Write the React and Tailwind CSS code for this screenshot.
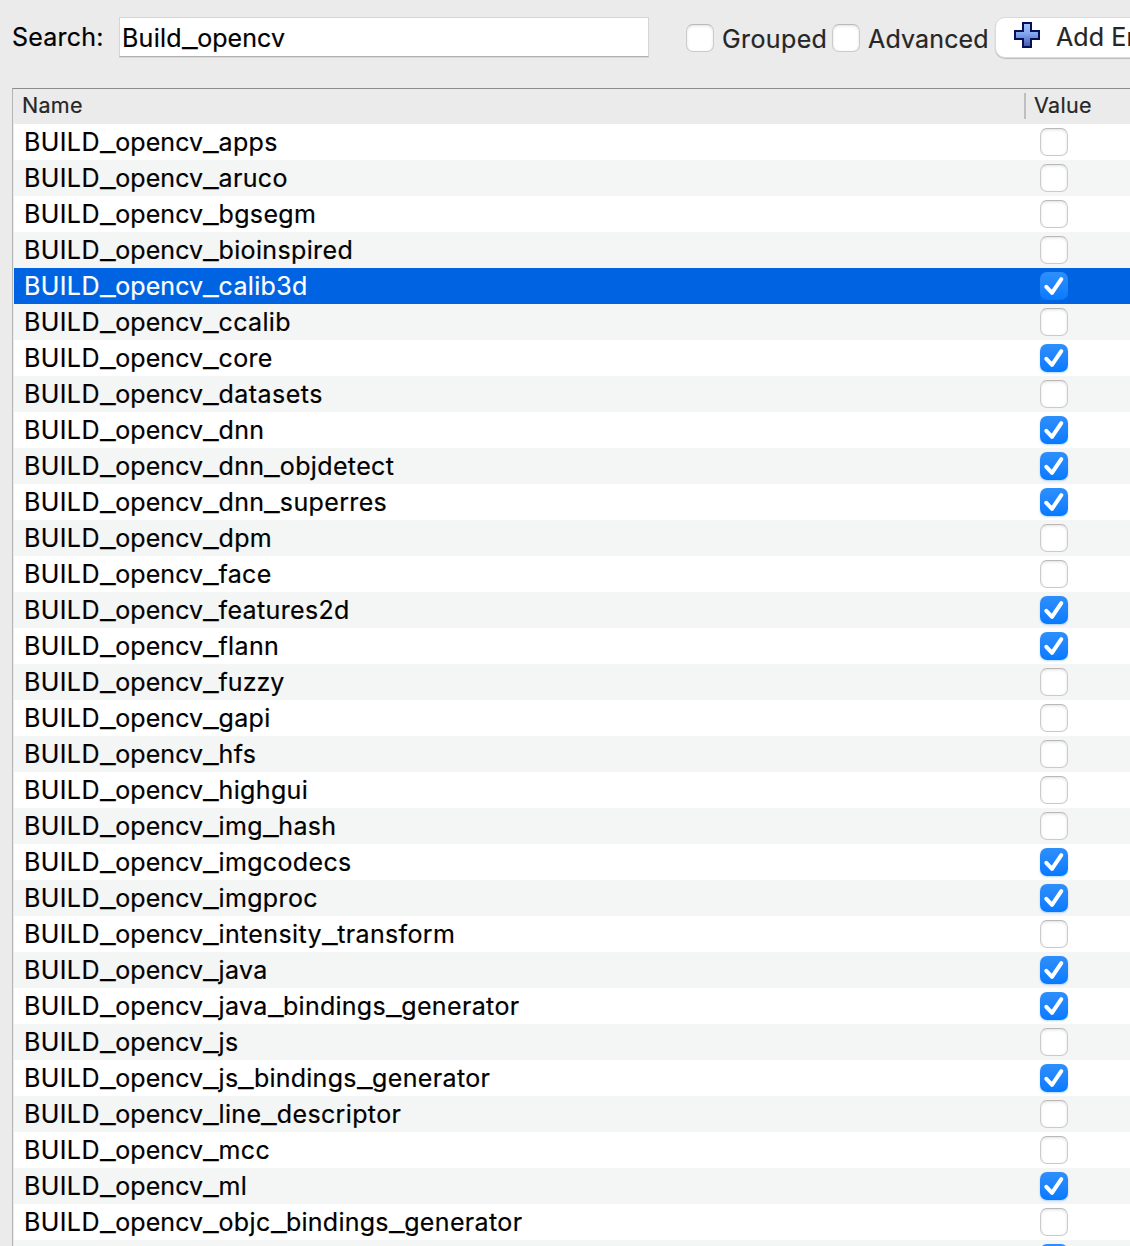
import { Fragment } from "react";

const rows = [
  ["apps", false],
  ["aruco", false],
  ["bgsegm", false],
  ["bioinspired", false],
  ["calib3d", true],
  ["ccalib", false],
  ["core", true],
  ["datasets", false],
  ["dnn", true],
  ["dnn_objdetect", true],
  ["dnn_superres", true],
  ["dpm", false],
  ["face", false],
  ["features2d", true],
  ["flann", true],
  ["fuzzy", false],
  ["gapi", false],
  ["hfs", false],
  ["highgui", false],
  ["img_hash", false],
  ["imgcodecs", true],
  ["imgproc", true],
  ["intensity_transform", false],
  ["java", true],
  ["java_bindings_generator", true],
  ["js", false],
  ["js_bindings_generator", true],
  ["line_descriptor", false],
  ["mcc", false],
  ["ml", true],
  ["objc_bindings_generator", false],
];

// Letter spacing of single words; the others take the default.
const tracking = {
  BUILD: "tracking-[0.4px]",
  Build: "tracking-[0.25px]",
  opencv: "tracking-[0.06px]",
  bindings: "tracking-[0.25px]",
  fuzzy: "tracking-[0.05px]",
  datasets: "tracking-[0.48px]",
};

// A name whose underscores are drawn wide, from edge to edge.
function WideName({ children }) {
  return children.split("_").map((word, i) => (
    <Fragment key={i}>
      {i > 0 && <span className="inline-block w-[15.4px] origin-left scale-x-[1.38]">_</span>}
      <span className={tracking[word] ?? "tracking-[0.36px]"}>{word}</span>
    </Fragment>
  ));
}

function Checkbox({ checked, selected }) {
  if (!checked) {
    return (
      <span className="block size-7 shrink-0 rounded-[7px] border border-[#cbcbcb] border-t-[#b9b9b9] bg-white shadow-[inset_0_1px_3px_rgba(0,0,0,0.13)]" />
    );
  }
  return (
    <span
      className={
        selected
          ? "block size-7 shrink-0 rounded-[7px] bg-linear-to-b from-[#2e8ffb] to-[#057aff]"
          : "block size-7 shrink-0 rounded-[7px] bg-linear-to-b from-[#2e8ffb] to-[#057aff] shadow-[0_1px_2px_rgba(5,122,255,0.3)]"
      }
    >
      <svg viewBox="0 0 28 28" className="size-7" fill="none" stroke="white" strokeWidth="4" strokeLinecap="round" strokeLinejoin="round">
        <path d="M6.3 14.8L12 20.8L21.3 7.2" />
      </svg>
    </span>
  );
}

function PlusIcon() {
  return (
    <svg viewBox="0 0 26 26" className="size-[26px] shrink-0">
      <defs>
        <linearGradient id="plus" x1="0" y1="0" x2="0" y2="1">
          <stop offset="0" stopColor="#a6c6ff" />
          <stop offset="0.45" stopColor="#82a5ee" />
          <stop offset="1" stopColor="#3f55a8" />
        </linearGradient>
      </defs>
      <path d="M9 1H17V9H25V17H17V25H9V17H1V9H9Z" fill="url(#plus)" stroke="#070f56" strokeWidth="2" />
    </svg>
  );
}

export default function App() {
  return (
    <div className="flex h-[1246px] w-[1130px] flex-col overflow-hidden bg-[#ebebeb] font-['Inter',sans-serif] text-[25px] leading-9 text-black [-webkit-text-stroke:0.2px_currentColor]">
      <header className="flex h-[88px] shrink-0 items-start whitespace-nowrap pl-3">
        <span className="mt-[19px] w-[107px] shrink-0 tracking-[0.2px]">Search:</span>
        <div className="mt-[17px] h-10 w-[530px] shrink-0 border border-[#d5d5d5] border-b-[#b0b0b0] bg-white pl-[2px] leading-[40px] shadow-[0_1px_0_#d8d8d8]">
          <WideName>Build_opencv</WideName>
        </div>
        <div className="ml-[37px] mt-6 flex w-[146px] shrink-0 text-[#262626]">
          <Checkbox />
          <span className="-mt-[3px] ml-2 tracking-[0.38px]">Grouped</span>
        </div>
        <div className="mt-6 flex w-[163px] shrink-0 text-[#262626]">
          <Checkbox />
          <span className="-mt-[3px] ml-2 tracking-[0.15px]">Advanced</span>
        </div>
        <div className="mt-[17px] flex h-[41px] w-[220px] shrink-0 items-start rounded-[10px] border border-[#dadada] bg-white pl-[18px] text-[#262626] shadow-[0_1px_1px_rgba(0,0,0,0.2)]">
          <span className="mt-1"><PlusIcon /></span>
          <span className="ml-4 mt-px tracking-[0.1px]">Add Entry</span>
        </div>
      </header>
      <main className="ml-3 flex min-h-0 flex-1 flex-col border-l border-t border-l-[#b4b4b4] border-t-[#8c8c8c]">
        <div className="flex h-[35px] shrink-0 items-start text-[21.5px] leading-[33px] tracking-[0.3px] text-[#262626]">
          <span className="w-[1011px] pl-[9px]">Name</span>
          <span className="mt-1 h-[26px] w-0.5 bg-[#bfbfbf]" />
          <span className="pl-2">Value</span>
        </div>
        <div className="ml-px flex flex-col">
          {rows.map(([name, checked], i) => (
            <div
              key={name}
              className={
                name === "calib3d"
                  ? "flex h-9 items-center bg-[#0063e1] text-white"
                  : i % 2
                    ? "flex h-9 items-center bg-[#f4f5f5]"
                    : "flex h-9 items-center bg-white"
              }
            >
              <span className="w-[1026px] pl-2.5">
                <WideName>{`BUILD_opencv_${name}`}</WideName>
              </span>
              <Checkbox checked={checked} selected={name === "calib3d"} />
            </div>
          ))}
          <div className="flex h-9 items-center bg-[#f4f5f5] pl-[1026px]">
            <Checkbox checked />
          </div>
        </div>
      </main>
    </div>
  );
}
